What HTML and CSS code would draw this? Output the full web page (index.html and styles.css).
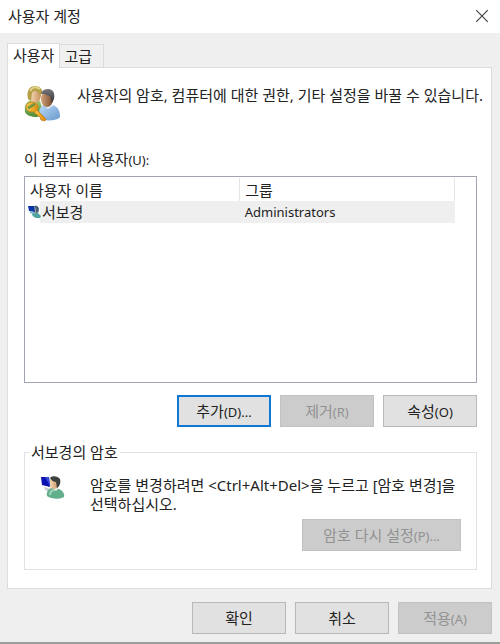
FILE: index.html
```html
<!DOCTYPE html>
<html lang="ko">
<head>
  <meta charset="UTF-8">
  <meta name="viewport" content="width=device-width, initial-scale=1">
  <title>사용자 계정</title>
  <link rel="stylesheet" href="styles.css">
</head>
<body>

  <header class="title-bar">
    <h1 class="title">사용자 계정</h1>
    <button class="close" type="button" aria-label="닫기">
      <svg width="14" height="14" viewBox="0 0 14 14"><path d="M1.2 1.2 12.8 12.8M12.8 1.2 1.2 12.8" fill="none" stroke="#444" stroke-width="1.2"/></svg>
    </button>
  </header>

  <main class="dialog">
    <div class="tabs" role="tablist">
      <button class="tab active" type="button" role="tab" id="tab-users" aria-selected="true" aria-controls="users">사용자</button>
      <button class="tab" type="button" role="tab" aria-selected="false">고급</button>
    </div>

    <section class="panel" id="users" role="tabpanel" aria-labelledby="tab-users">
      <div class="intro">
        <svg class="users-icon" width="38" height="38" viewBox="0 0 38 38" aria-hidden="true">
          <defs>
            <linearGradient id="skin" x1="0" x2="1"><stop offset="0" stop-color="#f8dfc0"/><stop offset="1" stop-color="#c8905c"/></linearGradient>
            <linearGradient id="face" x1="0" x2="1"><stop offset="0" stop-color="#d3a378"/><stop offset="1" stop-color="#754a30"/></linearGradient>
            <linearGradient id="green" x1="0" x2="0" y2="1"><stop offset="0" stop-color="#a2ca78"/><stop offset="1" stop-color="#4f8c37"/></linearGradient>
            <linearGradient id="blue" x1="0" x2="1" y2="1"><stop offset="0" stop-color="#c0ddf8"/><stop offset="1" stop-color="#6597cc"/></linearGradient>
            <linearGradient id="gold" x1="0" x2="1"><stop offset="0" stop-color="#ffd052"/><stop offset="1" stop-color="#df8a0c"/></linearGradient>
            <linearGradient id="hair" x1="0" x2="0" y2="1"><stop offset="0" stop-color="#77797c"/><stop offset="1" stop-color="#2c2e31"/></linearGradient>
          </defs>
          <path d="M1 27C0 19 3 16 8 15l8 1 4 13-7 3C7 32 2 30 1 27Z" fill="url(#green)"/>
          <ellipse cx="11" cy="10" rx="6" ry="8" fill="url(#skin)"/>
          <path d="M4 14C2 5 6 1 11 1c5 0 8 3 7 8l-3 1c0-3-2-4-5-4-3 1-2 5-3 10Z" fill="#b5a047"/>
          <path d="M6 6c2-4 6-5 10-2" fill="none" stroke="#e2d48b" stroke-width="2"/>
          <path d="M16 32c-2-6 0-11 5-13l8 1c5 2 7 6 7 12-3 4-16 5-20 0Z" fill="url(#blue)"/>
          <path d="M20 20l4 4 6-4" fill="#e9f3fc"/>
          <ellipse cx="23" cy="14" rx="6" ry="8" fill="url(#face)"/>
          <path d="M17 9c1-4 4-5 8-5 5 1 6 5 5 10l-2 4-2-7c-3 0-6-3-9-2Z" fill="url(#hair)"/>
          <path d="M10 22l12 12-1 2-4-1-1-3-3-2-5-5Z" fill="url(#gold)" stroke="#ba7414" stroke-width=".7"/>
          <ellipse cx="8" cy="22" rx="6" ry="5" fill="url(#gold)" stroke="#c5811a" stroke-width=".7"/>
          <path d="M5 22.500l5-3" stroke="#78983f" stroke-width="3" stroke-linecap="round"/>
        </svg>
        <p class="text">사용자의 암호, 컴퓨터에 대한 권한, 기타 설정을 바꿀 수 있습니다.</p>
      </div>

      <h2 class="list-label" id="list-label">이 컴퓨터 사용자<span class="latin">(U):</span></h2>
      <div class="list">
        <table class="user-table" aria-labelledby="list-label">
          <thead>
            <tr><th>사용자 이름</th><th>그룹</th></tr>
          </thead>
          <tbody>
            <tr>
              <td class="user-name">
                <svg width="13" height="13" viewBox="0 0 13 13" aria-hidden="true">
                  <path d="M4 9l2-2 4 1 3 3-1 2H8c-2-1-4-2-4-4Z" fill="#4fa59f"/>
                  <ellipse cx="8" cy="5" rx="3" ry="3.500" fill="#9aa0a0"/>
                  <path d="M6 1c4-1 6 2 4 6L8 8V4Z" fill="#4a6075"/>
                  <path d="M0 1l6 0 1 6-6-1Z" fill="#0b36a8"/>
                  <path d="M2 7l4 1" stroke="#7ab4cf" stroke-width="2"/>
                </svg><span>서보경</span>
              </td>
              <td class="latin">Administrators</td>
            </tr>
          </tbody>
        </table>
      </div>

      <div class="buttons">
        <button class="btn focused" type="button">추가<span class="latin">(D)...</span></button>
        <button class="btn" type="button" disabled>제거<span class="latin">(R)</span></button>
        <button class="btn" type="button">속성<span class="latin">(O)</span></button>
      </div>

      <fieldset class="password">
        <legend>서보경의 암호</legend>
        <div class="password-info">
          <svg width="25" height="23" viewBox="0 0 25 23" aria-hidden="true">
            <path d="M3 11l7 2-1 3-5-2Z" fill="#c8ced3"/>
            <path d="M6 20c-1-5 2-7 5-8l7 1c4 2 6 5 5 8-5 3-13 2-17-1Z" fill="#63ae8b"/>
            <path d="M9 19c0-3 2-5 5-5" fill="none" stroke="#a2d4b9" stroke-width="2"/>
            <path d="M12 12l3 3 3-3" fill="#e5eee8"/>
            <ellipse cx="13" cy="7" rx="5" ry="6" fill="url(#skin)"/>
            <path d="M9 2c2-3 8-2 10 1 1 3 0 7-3 9l-1-6c-2 0-4-1-6-4Z" fill="#3b413f"/>
            <path d="M0 1l8 0 1 10-8-2Z" fill="#0b12b5"/>
            <path d="M4 1h4l1 9Z" fill="#354bd5"/>
          </svg>
          <p class="text">암호를 변경하려면 &lt;Ctrl+Alt+Del&gt;을 누르고 [암호 변경]을 선택하십시오.</p>
        </div>
        <button class="btn reset" type="button" disabled>암호 다시 설정<span class="latin">(P)...</span></button>
      </fieldset>
    </section>

    <footer class="buttons footer">
      <button class="btn" type="button">확인</button>
      <button class="btn" type="button">취소</button>
      <button class="btn" type="button" disabled>적용<span class="latin">(A)</span></button>
    </footer>
  </main>

</body>
</html>
```

FILE: styles.css
```css
* {
  box-sizing: border-box;
}

body {
  margin: 0;
  min-height: 100vh;
  display: flex;
  flex-direction: column;
  background-color: #efefef;
  border-bottom: 2px solid #9a9d98;
  color: #222;
  font-family: "Noto Sans", "Noto Sans CJK KR", sans-serif;
  font-size: 15px;
  line-height: 20px;
}

button {
  font: inherit;
  color: inherit;
}

h1, h2, p {
  margin: 0;
  font-size: 15px;
  font-weight: normal;
}

.latin {
  font-size: 13px;
}

.title-bar {
  display: flex;
  align-items: center;
  justify-content: space-between;
  height: 33px;
  padding: 0 11px 2px 8px;
  background-color: #fff;
}

.close {
  display: flex;
  padding: 0;
  border: 0;
  background: none;
}

.dialog {
  flex: 1;
  display: flex;
  flex-direction: column;
  padding: 10px 8px 8px 7px;
}

/* Tabs */
.tabs {
  display: flex;
  align-items: flex-end;
}

.tab {
  height: 23px;
  padding: 0 11px 0 4px;
  border: 1px solid #dcdcdc;
  border-width: 1px 1px 0 0;
  background-color: #f0f0f0;
}

.tab.active {
  height: 25px;
  padding: 0 5px 2px;
  border-left-width: 1px;
  background-color: #fff;
  margin-bottom: -1px;
  z-index: 1;
}

.panel {
  flex: 1;
  display: flex;
  flex-direction: column;
  padding: 17px 14px 18px 16px;
  border: 1px solid #dcdcdc;
  background-color: #fff;
}

.intro {
  display: flex;
  gap: 15px;
  margin-right: -12px;
}

.users-icon {
  flex: none;
}

.list-label {
  margin: 26px 0 6px;
}

/* User list */
.list {
  flex: 1;
  padding: 1px 21px 1px 0;
  border: 1px solid #a0a4b0;
}

.user-table {
  width: 100%;
  table-layout: fixed;
  border-collapse: collapse;
}

.user-table th {
  height: 23px;
  padding: 0 5px;
  border-right: 1px solid #e5e5e5;
  font-weight: normal;
  text-align: left;
}

.user-table td {
  height: 22px;
  padding: 0 5px;
  background-color: #efefef;
}

.user-table .user-name {
  padding: 0 0 0 3px;
  background: linear-gradient(to right, #fff 15px, #efefef 15px);
}

.user-name svg {
  margin-right: 1px;
}

/* Buttons */
.buttons {
  display: flex;
  justify-content: flex-end;
  gap: 9px;
  margin-top: 12px;
}

.footer {
  margin-top: 13px;
}

.btn {
  min-width: 94px;
  height: 32px;
  padding: 0 4px;
  border: 1px solid #b8b8b8;
  background-color: #e1e1e1;
}

.btn.focused {
  border: 2px solid #0f78d4;
}

.btn:disabled {
  border-color: #c2c2c2;
  background-color: #ccc;
  color: #929292;
}

/* Password group */
.password {
  margin: 15px 0 0;
  padding: 14px 15px 18px 16px;
  border: 1px solid #e2e2e2;
}

.password legend {
  margin-left: -12px;
  padding: 0 2px;
}

.password-info {
  display: flex;
  gap: 24px;
  margin-right: -8px;
}

.password-info svg {
  flex: none;
}

.password-info .text {
  line-height: 19px;
}

.reset {
  display: block;
  min-width: 159px;
  margin: 5px 0 0 auto;
}
```
